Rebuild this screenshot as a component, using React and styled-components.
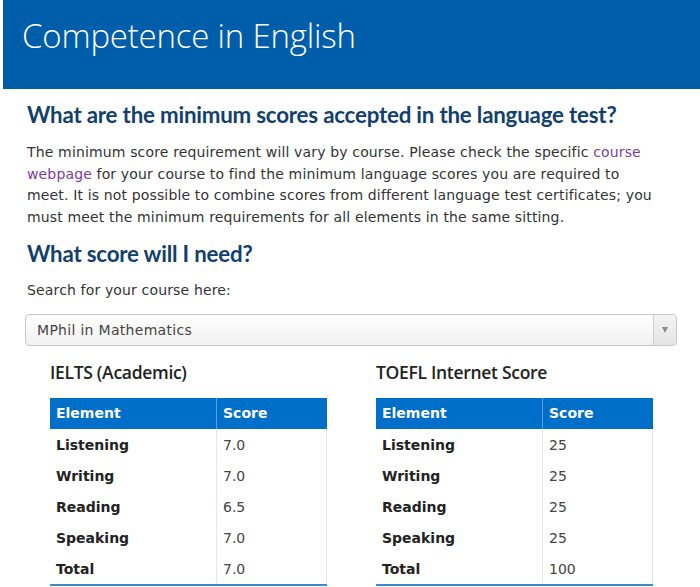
import React from 'react';
import styled, { createGlobalStyle } from 'styled-components';

const GlobalStyle = createGlobalStyle`
  html, body {
    margin: 0;
    padding: 0;
    background: #fff;
  }
  body {
    font-family: "DejaVu Sans", Verdana, sans-serif;
    color: #333;
  }
`;

const Page = styled.div`
  width: 700px;
  height: 587px;
  overflow: hidden;
  padding-left: 3px;
  box-sizing: border-box;
`;

const Banner = styled.header`
  height: 89px;
  background: #005da9;
  padding: 13px 0 0 19px;
  box-sizing: border-box;

  h1 {
    margin: 0;
    font-family: "Open Sans", sans-serif;
    font-weight: 300;
    font-size: 33px;
    letter-spacing: -0.2px;
    color: #fff;
  }
`;

const Content = styled.main`
  padding: 12px 20px 0 24px;
`;

const Heading = styled.h2`
  margin: ${p => p.$margin || '0'};
  font-family: "Lato", sans-serif;
  font-weight: 700;
  font-size: 22.3px;
  color: #123f6d;
  letter-spacing: -0.2px;
  line-height: 28px;
`;

const Text = styled.p`
  margin: ${p => p.$margin || '13px 0 0'};
  font-size: 14px;
  letter-spacing: 0.15px;
  line-height: 21.5px;
  white-space: nowrap;
  color: #333;

  a {
    color: #7e3aa5;
    text-decoration: none;
  }
`;

const Select = styled.div`
  margin: 12px 0 0 -2px;
  width: 652px;
  height: 32px;
  box-sizing: border-box;
  border: 1px solid #c8c8c8;
  border-radius: 4px;
  background: linear-gradient(#ffffff, #f1f1f1);
  display: flex;
  align-items: stretch;
  font-size: 14px;
  color: #444;

  span {
    flex: 1;
    display: flex;
    align-items: center;
    padding-left: 11px;
    letter-spacing: 0.3px;
  }
`;

const Arrow = styled.div`
  width: 22px;
  border-left: 1px solid #cfcfcf;
  background: linear-gradient(#f4f4f4, #e4e4e4);
  border-radius: 0 4px 4px 0;
  display: flex;
  align-items: center;
  justify-content: center;

  &::after {
    content: '';
    border-left: 3.5px solid transparent;
    border-right: 3.5px solid transparent;
    border-top: 6px solid #8a8a8a;
  }
`;

const Tables = styled.div`
  display: flex;
  gap: 49px;
  margin: 14px 0 0 23px;
`;

const TableBlock = styled.section`
  width: 277px;

  h3 {
    margin: 0 0 14px;
    font-family: "Open Sans", sans-serif;
    font-weight: 600;
    font-size: 17.5px;
    letter-spacing: -0.3px;
    color: #222;
    line-height: 24px;
  }
`;

const Table = styled.table`
  width: 100%;
  border-collapse: collapse;
  border-bottom: 2px solid #3d8bc9;
  font-size: 14px;

  th {
    background: #006fc9;
    color: #fff;
    text-align: left;
    font-weight: 700;
    height: 31px;
    padding: 0 6px;
    border-right: 1px solid #5aa2dd;
  }
  th:last-child { border-right: none; }
  td {
    height: 29px;
    padding: 2px 6px 0;
    vertical-align: middle;
  }
  td:first-child {
    width: 154px;
    font-weight: 700;
    color: #222;
    border-right: 1px solid #e3e8ee;
  }
  td:last-child {
    color: #444;
    border-right: 1px solid #e3e8ee;
  }
`;

const ielts = [
  ['Listening', '7.0'],
  ['Writing', '7.0'],
  ['Reading', '6.5'],
  ['Speaking', '7.0'],
  ['Total', '7.0'],
];

const toefl = [
  ['Listening', '25'],
  ['Writing', '25'],
  ['Reading', '25'],
  ['Speaking', '25'],
  ['Total', '100'],
];

const ScoreTable = ({ title, rows }) => (
  <TableBlock>
    <h3>{title}</h3>
    <Table>
      <thead>
        <tr><th>Element</th><th>Score</th></tr>
      </thead>
      <tbody>
        {rows.map(([name, score]) => (
          <tr key={name}><td>{name}</td><td>{score}</td></tr>
        ))}
      </tbody>
    </Table>
  </TableBlock>
);

export default function App() {
  return (
    <Page>
      <GlobalStyle />
      <Banner><h1>Competence in English</h1></Banner>
      <Content>
        <Heading>What are the minimum scores accepted in the language test?</Heading>
        <Text>
          The minimum score requirement will vary by course. Please check the specific <a href="#">course<br />webpage</a> for your course to find the minimum language scores you are required to<br />
          meet. It is not possible to combine scores from different language test certificates; you<br />
          must meet the minimum requirements for all elements in the same sitting.
        </Text>
        <Heading $margin="12px 0 0">What score will I need?</Heading>
        <Text $margin="12px 0 0">Search for your course here:</Text>
        <Select>
          <span>MPhil in Mathematics</span>
          <Arrow />
        </Select>
        <Tables>
          <ScoreTable title="IELTS (Academic)" rows={ielts} />
          <ScoreTable title="TOEFL Internet Score" rows={toefl} />
        </Tables>
      </Content>
    </Page>
  );
}
